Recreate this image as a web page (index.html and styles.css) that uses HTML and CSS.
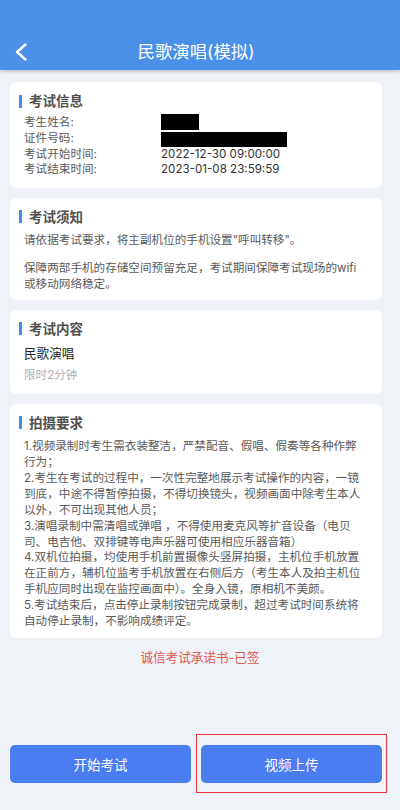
FILE: index.html
```html
<!DOCTYPE html>
<html lang="zh-CN">
<head>
    <meta charset="UTF-8">
    <meta name="viewport" content="width=device-width, initial-scale=1.0">
    <title>民歌演唱(模拟)</title>
    <link rel="stylesheet" href="styles.css">
</head>
<body>
    <!-- Top navigation -->
    <header class="nav-bar">
        <a class="nav-back" href="#">
            <svg width="12" height="18" viewBox="0 0 12 18">
                <polyline points="10.5,1.5 2,9 10.5,16.5" fill="none" stroke="#fff" stroke-width="2.4" stroke-linecap="round" stroke-linejoin="round"/>
            </svg>
        </a>
        <h1 class="nav-title">民歌演唱(模拟)</h1>
        <span></span>
    </header>

    <main class="page">
        <!-- Exam info -->
        <section class="card">
            <h3 class="card-title">考试信息</h3>
            <div class="info-grid">
                <span class="info-label">考生姓名:</span>
                <span class="info-value"><i class="redact redact-name"></i></span>
                <span class="info-label">证件号码:</span>
                <span class="info-value"><i class="redact redact-id"></i></span>
                <span class="info-label">考试开始时间:</span>
                <span class="info-value">2022-12-30 09:00:00</span>
                <span class="info-label">考试结束时间:</span>
                <span class="info-value">2023-01-08 23:59:59</span>
            </div>
        </section>

        <!-- Notice -->
        <section class="card">
            <h3 class="card-title">考试须知</h3>
            <div class="card-text notice">
                <p>请依据考试要求，将主副机位的手机设置"呼叫转移"。</p>
                <p>保障两部手机的存储空间预留充足，考试期间保障考试现场的wifi<br>或移动网络稳定。</p>
            </div>
        </section>

        <!-- Content -->
        <section class="card">
            <h3 class="card-title">考试内容</h3>
            <div class="subject">
                <p class="subject-name">民歌演唱</p>
                <p class="subject-time">限时2分钟</p>
            </div>
        </section>

        <!-- Recording rules -->
        <section class="card">
            <h3 class="card-title">拍摄要求</h3>
            <div class="card-text rules">
                <p>1.视频录制时考生需衣装整洁，严禁配音、假唱、假奏等各种作弊<br>行为；</p>
                <p>2.考生在考试的过程中，一次性完整地展示考试操作的内容，一镜<br>到底，中途不得暂停拍摄，不得切换镜头，视频画面中除考生本人<br>以外，不可出现其他人员；</p>
                <p>3.演唱录制中需清唱或弹唱 ，不得使用麦克风等扩音设备（电贝<br>司、电吉他、双排键等电声乐器可使用相应乐器音箱）</p>
                <p>4.双机位拍摄，均使用手机前置摄像头竖屏拍摄，主机位手机放置<br>在正前方，辅机位监考手机放置在右侧后方（考生本人及拍主机位<br>手机应同时出现在监控画面中）。全身入镜，原相机不美颜。</p>
                <p>5.考试结束后，点击停止录制按钮完成录制，超过考试时间系统将<br>自动停止录制，不影响成绩评定。</p>
            </div>
        </section>

        <p class="pledge">诚信考试承诺书-已签</p>
    </main>

    <!-- Bottom buttons -->
    <footer class="action-bar">
        <button class="btn">开始考试</button>
        <div class="btn-wrap marked">
            <button class="btn">视频上传</button>
        </div>
    </footer>
</body>
</html>
```

FILE: styles.css
```css
/* Base */
* {
    box-sizing: border-box;
}

body {
    margin: 0;
    min-height: 100vh;
    display: flex;
    flex-direction: column;
    background: #eff3f8;
    font-family: "Inter", "Noto Sans CJK SC", sans-serif;
    font-size: 11.6px;
    color: #5a5a5a;
}

p,
h1,
h3 {
    margin: 0;
}

/* Header */
.nav-bar {
    display: grid;
    grid-template-columns: 1fr auto 1fr;
    align-items: center;
    height: 70px;
    padding: 34px 23px 0 15px;
    background: #4a90e8;
    box-shadow: 0 2px 3px rgba(0, 0, 0, 0.18);
}

.nav-back {
    display: flex;
    align-items: center;
    height: 24px;
}

.nav-title {
    font-size: 17.4px;
    font-weight: 400;
    line-height: 24px;
    color: #fff;
}

/* Cards */
.page {
    padding: 12px 18px 0 10px;
}

.card {
    background: #fff;
    border-radius: 6px;
    padding: 9px 14px 8px;
    margin-bottom: 10px;
}

.card-title {
    display: flex;
    align-items: center;
    margin-left: -5px;
    font-size: 13.5px;
    font-weight: 600;
    line-height: 20px;
    color: #505050;
}

.card-title::before {
    content: "";
    width: 3px;
    height: 13px;
    margin-right: 7px;
    background: #3f8cf0;
}

.info-grid {
    display: grid;
    grid-template-columns: 137px 1fr;
    margin: 4px 0 2px;
    line-height: 15.6px;
}

.info-value {
    color: #333;
}

.redact {
    display: inline-block;
    height: 16px;
    vertical-align: top;
    background: #000;
}

.redact-name {
    width: 38px;
    margin-top: -1px;
}

.redact-id {
    width: 126px;
    height: 15px;
    margin-top: 1px;
}

.card-text {
    line-height: 16px;
}

.notice {
    margin-top: 5.5px;
}

.notice p + p {
    margin-top: 11.3px;
}

.subject {
    margin: 5px 0 3px;
}

.subject-name {
    font-size: 12.6px;
    line-height: 20px;
    color: #222;
}

.subject-time {
    margin-top: 3px;
    line-height: 16px;
    color: #b0b0b0;
}

.rules {
    margin-top: 6.5px;
    line-height: 15.9px;
}

.pledge {
    padding-left: 8px;
    text-align: center;
    font-size: 12.6px;
    line-height: 20px;
    color: #e0574f;
}

/* Bottom buttons */
.action-bar {
    display: grid;
    grid-template-columns: 1fr 1fr;
    gap: 10px;
    margin-top: auto;
    padding: 0 18px 27px 10px;
}

.btn {
    width: 100%;
    height: 38px;
    border: none;
    border-radius: 5px;
    background: #4a7cf2;
    color: #fff;
    font-family: inherit;
    font-size: 13.5px;
    cursor: pointer;
}

.btn-wrap {
    position: relative;
}

.marked::after {
    content: "";
    position: absolute;
    top: -11px;
    left: -5px;
    right: -5px;
    bottom: -10px;
    border: 1.5px solid #e8333f;
    pointer-events: none;
}
```
